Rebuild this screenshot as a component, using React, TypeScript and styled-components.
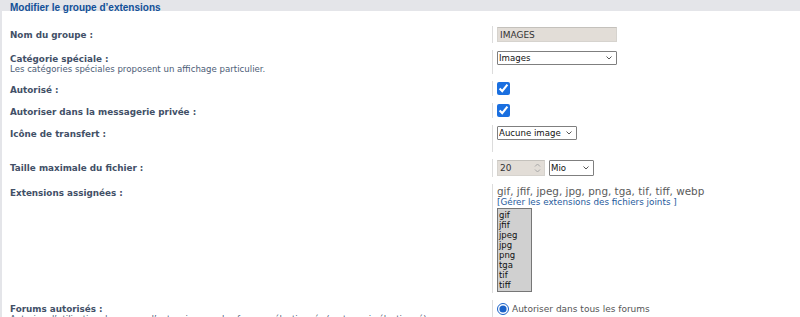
import React from "react";
import styled, { createGlobalStyle } from "styled-components";

const GlobalStyle = createGlobalStyle`
  html, body { margin: 0; padding: 0; background: #ffffff; }
  body { font-family: "DejaVu Sans", Verdana, sans-serif; }
`;

const Page = styled.div`
  height: 317px;
  overflow: hidden;
  background: #e4e5e9;
`;

const LegendBand = styled.div`
  height: 11px;
  padding-left: 10px;
`;

const Legend = styled.div`
  font-family: "Liberation Sans", Arial, sans-serif;
  font-weight: bold;
  font-size: 10px;
  line-height: 12px;
  padding-top: 2px;
  color: #115098;
  white-space: nowrap;
`;

const Fieldset = styled.div`
  margin-left: 2px;
  background: #ffffff;
  padding-top: 15px;
  display: flex;
  flex-direction: column;
  gap: 7px;
  min-height: 400px;
`;

const Row = styled.div`
  display: flex;
  align-items: stretch;
`;

const Dt = styled.div`
  width: 490px;
  flex-shrink: 0;
  box-sizing: border-box;
  padding: 5px 0 0 8px;
`;

const Label = styled.div`
  font-weight: bold;
  font-size: 8.8px;
  line-height: 9px;
  color: #425067;
  white-space: nowrap;
`;

const Explain = styled.div`
  font-size: 8.6px;
  line-height: 9px;
  padding-top: 1px;
  color: #4c5d77;
  white-space: nowrap;
`;

const Dd = styled.div`
  border-left: 1px solid #dcdcdc;
  padding: 1px 0 1px 4px;
  display: flex;
  flex-direction: column;
  align-items: flex-start;
`;

const TextInput = styled.input`
  display: block;
  box-sizing: border-box;
  width: 120px;
  height: 15px;
  margin: 0;
  padding: 0 2px;
  border: 1px solid #d6d3ce;
  border-top-color: #c4c1bc;
  background: #e2ddd7;
  font-family: "DejaVu Sans", Verdana, sans-serif;
  font-size: 9px;
  color: #333;
  outline: none;
`;

const SelectWrap = styled.div<{ $w: number; $h?: number }>`
  position: relative;
  width: ${(p) => p.$w}px;
  height: ${(p) => p.$h ?? 14}px;
  line-height: 0;
`;

const Select = styled.select`
  display: block;
  appearance: none;
  -webkit-appearance: none;
  box-sizing: border-box;
  width: 100%;
  height: 100%;
  margin: 0;
  padding: 0 12px 0 1px;
  border: 1px solid #7f7f7f;
  border-radius: 1px;
  background: #ffffff;
  font-family: "DejaVu Sans", Verdana, sans-serif;
  font-size: 8.6px;
  line-height: normal;
  color: #111;
  outline: none;
`;

const Chevron = styled.svg`
  position: absolute;
  right: 5px;
  top: 50%;
  margin-top: -2px;
  width: 6px;
  height: 4px;
  pointer-events: none;
`;

const Check = styled.input`
  display: block;
  width: 13px;
  height: 13px;
  margin: 0;
  accent-color: #1a6fe0;
`;

const Preview = styled.div`
  height: 11px;
`;

const Inline = styled.div`
  display: flex;
  gap: 4px;
  align-items: center;
`;

const NumberWrap = styled.div`
  position: relative;
  box-sizing: border-box;
  width: 48px;
  height: 16px;
  border: 1px solid #d6d3ce;
  border-top-color: #c4c1bc;
  background: #e2ddd7;
  display: flex;
  align-items: center;
`;

const NumberInput = styled.input`
  width: 30px;
  border: none;
  background: transparent;
  padding: 0 2px;
  margin: 0;
  font-family: "DejaVu Sans", Verdana, sans-serif;
  font-size: 9px;
  color: #333;
  outline: none;
`;

const Spinner = styled.svg`
  position: absolute;
  right: 3px;
  top: 1px;
  width: 7px;
  height: 12px;
`;

const ExtText = styled.div`
  font-size: 10.4px;
  line-height: 12px;
  color: #5a5a5a;
  white-space: nowrap;
`;

const ManageLink = styled.a`
  font-size: 8.8px;
  line-height: 10px;
  color: #1f5a9c;
  text-decoration: none;
  white-space: nowrap;
`;

const ListBox = styled.div`
  margin-top: 1px;
  box-sizing: border-box;
  width: 35px;
  height: 84px;
  border: 1px solid #767676;
  background: #d0d0d0;
  padding: 1px 0 1px 1px;
  overflow: hidden;
`;

const ListItem = styled.div`
  font-size: 8.5px;
  line-height: 10px;
  color: #111;
`;

const RadioLine = styled.label`
  display: flex;
  align-items: center;
  gap: 3px;
  height: 15px;
  font-size: 9px;
  color: #555;
  white-space: nowrap;
`;

const Radio = styled.input`
  width: 12px;
  height: 12px;
  margin: 0;
  accent-color: #1a62c9;
`;

const ChevronIcon = () => (
  <Chevron viewBox="0 0 6 4">
    <path d="M0.5 0.5 L3 3 L5.5 0.5" fill="none" stroke="#555" strokeWidth="1" />
  </Chevron>
);

const extensions = ["gif", "jfif", "jpeg", "jpg", "png", "tga", "tif", "tiff"];

export default function App() {
  return (
    <>
      <GlobalStyle />
      <Page>
        <LegendBand>
          <Legend>Modifier le groupe d’extensions</Legend>
        </LegendBand>
        <Fieldset>
          <Row>
            <Dt>
              <Label>Nom du groupe :</Label>
            </Dt>
            <Dd>
              <TextInput defaultValue="IMAGES" readOnly />
            </Dd>
          </Row>
          <Row>
            <Dt>
              <Label>Catégorie spéciale :</Label>
              <Explain>Les catégories spéciales proposent un affichage particulier.</Explain>
            </Dt>
            <Dd>
              <SelectWrap $w={120}>
                <Select defaultValue="images">
                  <option value="images">Images</option>
                </Select>
                <ChevronIcon />
              </SelectWrap>
            </Dd>
          </Row>
          <Row>
            <Dt>
              <Label>Autorisé :</Label>
            </Dt>
            <Dd>
              <Check type="checkbox" defaultChecked />
            </Dd>
          </Row>
          <Row>
            <Dt>
              <Label>Autoriser dans la messagerie privée :</Label>
            </Dt>
            <Dd>
              <Check type="checkbox" defaultChecked />
            </Dd>
          </Row>
          <Row>
            <Dt>
              <Label>Icône de transfert :</Label>
            </Dt>
            <Dd>
              <SelectWrap $w={80}>
                <Select defaultValue="none">
                  <option value="none">Aucune image</option>
                </Select>
                <ChevronIcon />
              </SelectWrap>
              <Preview />
            </Dd>
          </Row>
          <Row>
            <Dt>
              <Label>Taille maximale du fichier :</Label>
            </Dt>
            <Dd>
              <Inline>
                <NumberWrap>
                  <NumberInput defaultValue="20" readOnly />
                  <Spinner viewBox="0 0 7 12">
                    <path d="M1 4.5 L3.5 2 L6 4.5" fill="none" stroke="#a8a8a8" strokeWidth="1" />
                    <path d="M1 7.5 L3.5 10 L6 7.5" fill="none" stroke="#a8a8a8" strokeWidth="1" />
                  </Spinner>
                </NumberWrap>
                <SelectWrap $w={45} $h={16}>
                  <Select defaultValue="mio">
                    <option value="mio">Mio</option>
                  </Select>
                  <ChevronIcon />
                </SelectWrap>
              </Inline>
            </Dd>
          </Row>
          <Row>
            <Dt>
              <Label>Extensions assignées :</Label>
            </Dt>
            <Dd>
              <ExtText>gif, jfif, jpeg, jpg, png, tga, tif, tiff, webp</ExtText>
              <ManageLink href="#">[Gérer les extensions des fichiers joints ]</ManageLink>
              <ListBox role="listbox">
                {extensions.map((e) => (
                  <ListItem key={e} role="option">
                    {e}
                  </ListItem>
                ))}
              </ListBox>
            </Dd>
          </Row>
          <Row>
            <Dt>
              <Label>Forums autorisés :</Label>
              <Explain>
                Autoriser l’utilisation du groupe d’extensions sur les forums sélectionnés (ou tous si sélectionné).
              </Explain>
            </Dt>
            <Dd>
              <RadioLine>
                <Radio type="radio" name="forums" defaultChecked />
                Autoriser dans tous les forums
              </RadioLine>
              <RadioLine>
                <Radio type="radio" name="forums" />
                Autoriser uniquement dans les forums sélectionnés
              </RadioLine>
            </Dd>
          </Row>
        </Fieldset>
      </Page>
    </>
  );
}
